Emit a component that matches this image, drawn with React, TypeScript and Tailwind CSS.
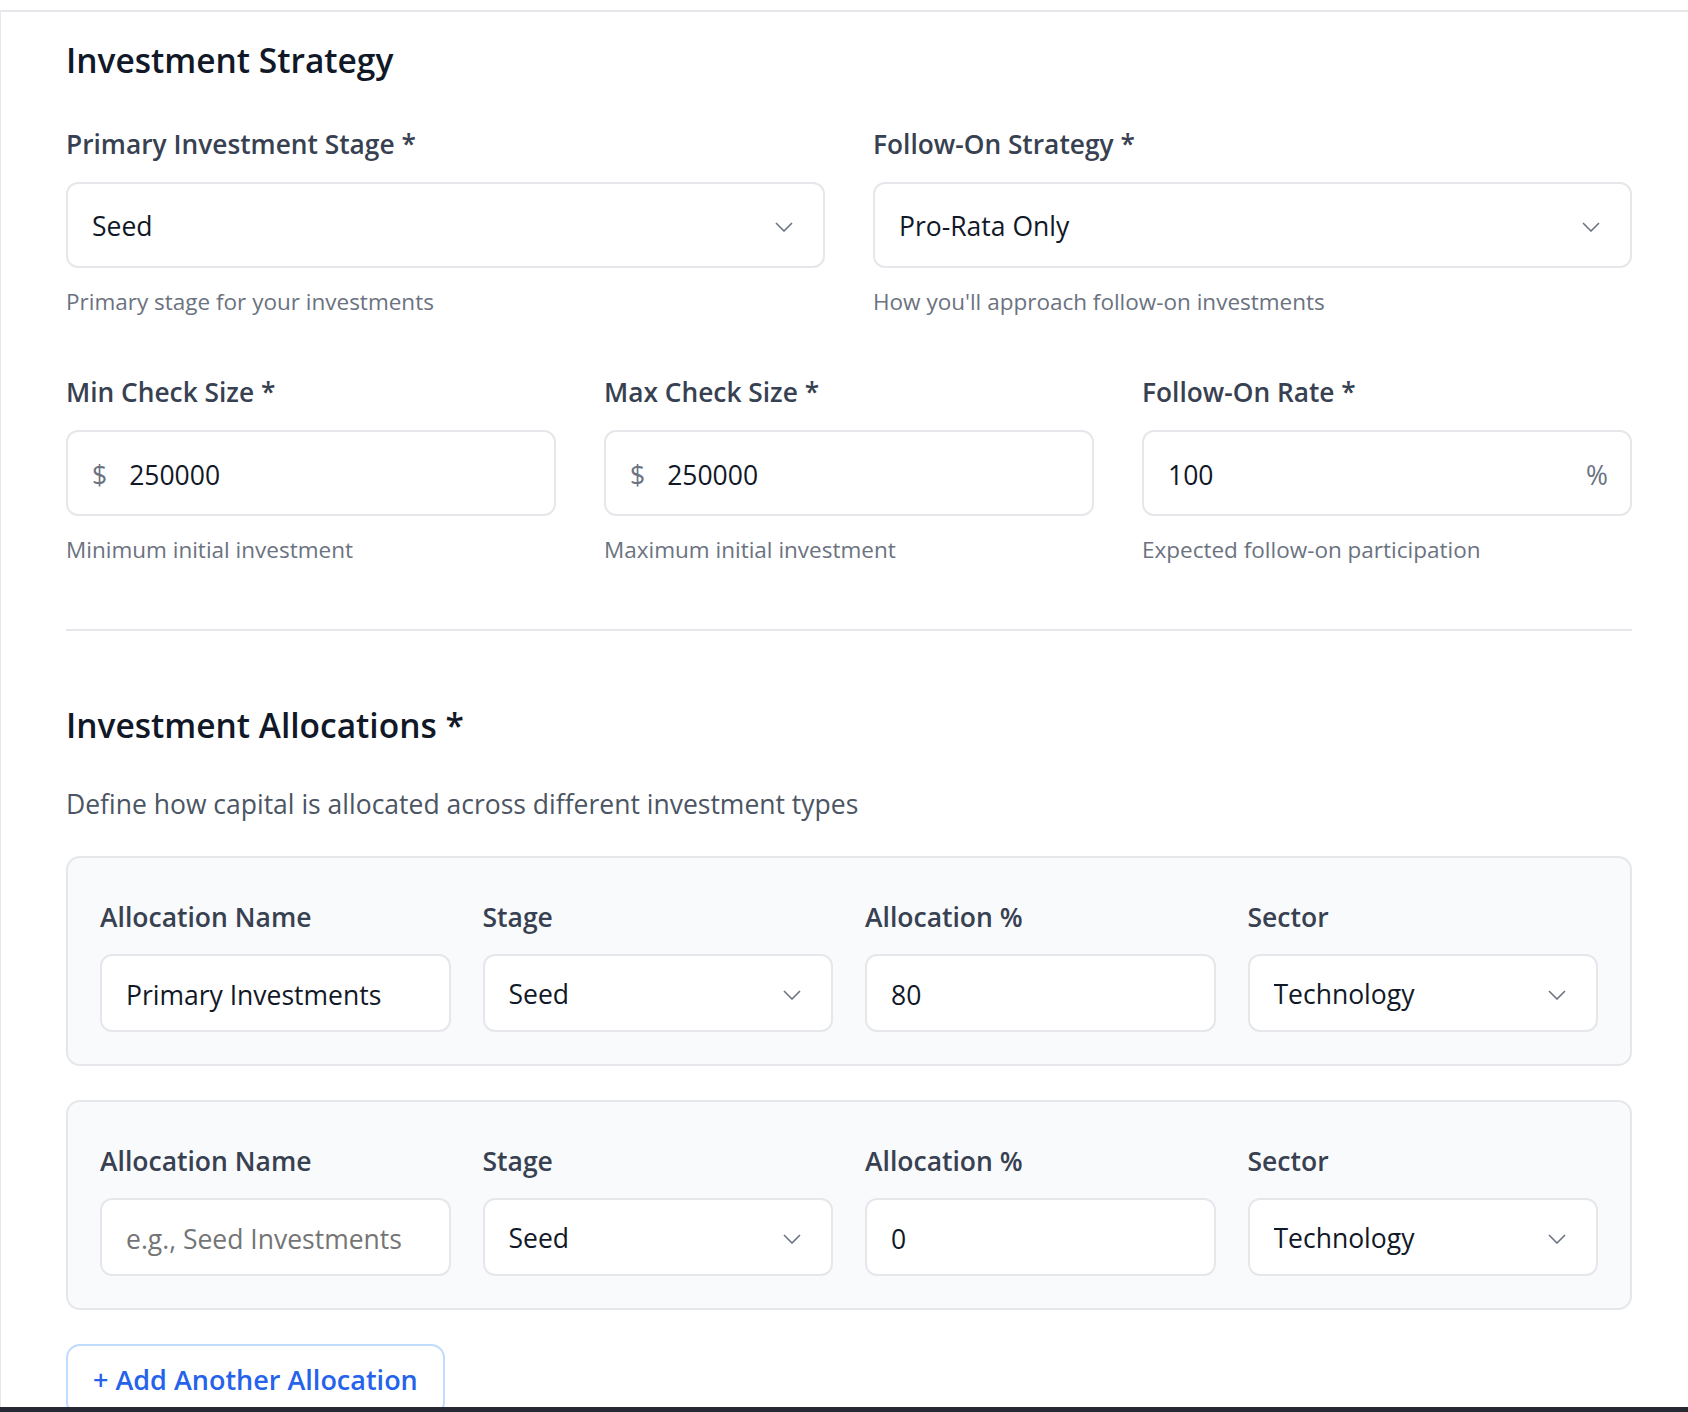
import { useState } from "react";

const stages = ["Pre-Seed", "Seed", "Series A", "Series B", "Growth"];
const followOns = ["Pro-Rata Only", "Super Pro-Rata", "Selective", "None"];
const sectors = ["Technology", "Healthcare", "Fintech", "Consumer", "Climate"];

function Chevron() {
  return (
    <svg width="18" height="10" viewBox="0 0 18 10" fill="none" className="shrink-0">
      <path d="M1 1l8 8 8-8" stroke="#6b7280" strokeWidth="1.6" />
    </svg>
  );
}

function SelectBox({ value, options, tall }: { value: string; options: string[]; tall?: boolean }) {
  const [v, setV] = useState(value);
  return (
    <div
      className={
        "flex items-center border-2 border-[#e5e7eb] rounded-[12px] bg-white pl-6 pr-[30px] pt-[4px] " +
        (tall ? "h-[86px]" : "h-[78px]")
      }
    >
      <select
        value={v}
        onChange={(e) => setV(e.target.value)}
        className="appearance-none flex-1 min-w-0 bg-transparent outline-none text-[26.5px] text-[#111827]"
      >
        {options.map((o) => (
          <option key={o}>{o}</option>
        ))}
      </select>
      <Chevron />
    </div>
  );
}

function TextBox({
  value,
  placeholder,
  prefix,
  suffix,
  tall,
}: {
  value?: string;
  placeholder?: string;
  prefix?: string;
  suffix?: string;
  tall?: boolean;
}) {
  const [v, setV] = useState(value ?? "");
  return (
    <div
      className={
        "flex items-center border-2 border-[#e5e7eb] rounded-[12px] bg-white pl-6 pt-[5px] " +
        (suffix ? "pr-[22px] " : "pr-6 ") +
        (tall ? "h-[86px]" : "h-[78px]")
      }
    >
      {prefix && <span className="text-[26.5px] text-[#6b7280] mr-[22px]">{prefix}</span>}
      <input
        value={v}
        placeholder={placeholder}
        onChange={(e) => setV(e.target.value)}
        className="flex-1 min-w-0 bg-transparent outline-none text-[26.5px] text-[#111827] placeholder:text-[#757575]"
      />
      {suffix && <span className="text-[26.5px] text-[#6b7280]">{suffix}</span>}
    </div>
  );
}

function Field({
  label,
  help,
  children,
}: {
  label: string;
  help: string;
  children: React.ReactNode;
}) {
  return (
    <div>
      <label className="block text-[26.3px] leading-[40px] font-semibold text-[#374151] mb-[18px]">{label}</label>
      {children}
      <p className="mt-[18px] text-[22.5px] leading-[32px] text-[#6b7280]">{help}</p>
    </div>
  );
}

function AllocationCard({ name, placeholder, pct }: { name?: string; placeholder?: string; pct: string }) {
  const label = "block text-[26.5px] leading-[40px] font-semibold text-[#374151] mb-[17px]";
  return (
    <div className="border-2 border-[#e5e7eb] rounded-[14px] bg-[#f9fafb] pt-[39px] px-8 pb-8">
      <div className="grid grid-cols-4 gap-8">
        <div>
          <label className={label}>Allocation Name</label>
          <TextBox value={name} placeholder={placeholder} />
        </div>
        <div>
          <label className={label}>Stage</label>
          <SelectBox value="Seed" options={stages} />
        </div>
        <div>
          <label className={label}>Allocation %</label>
          <TextBox value={pct} />
        </div>
        <div>
          <label className={label}>Sector</label>
          <SelectBox value="Technology" options={sectors} />
        </div>
      </div>
    </div>
  );
}

export default function App() {
  return (
    <div className="h-screen flex flex-col bg-white font-['Open_Sans',sans-serif] overflow-hidden">
      <div className="flex-1 overflow-hidden pt-[10px]">
        <div className="border-t-2 border-l border-[#e5e7eb] pl-[65px] pr-[56px] pt-[24px] min-h-full">
          <h2 className="text-[33.5px] leading-[48px] font-semibold text-[#111827]">Investment Strategy</h2>

          <div className="grid grid-cols-2 gap-x-12 mt-[40px]">
            <Field label="Primary Investment Stage *" help="Primary stage for your investments">
              <SelectBox value="Seed" options={stages} tall />
            </Field>
            <Field label="Follow-On Strategy *" help="How you'll approach follow-on investments">
              <SelectBox value="Pro-Rata Only" options={followOns} tall />
            </Field>
          </div>

          <div className="grid grid-cols-3 gap-x-12 mt-[54px]">
            <Field label="Min Check Size *" help="Minimum initial investment">
              <TextBox value="250000" prefix="$" tall />
            </Field>
            <Field label="Max Check Size *" help="Maximum initial investment">
              <TextBox value="250000" prefix="$" tall />
            </Field>
            <Field label="Follow-On Rate *" help="Expected follow-on participation">
              <TextBox value="100" suffix="%" tall />
            </Field>
          </div>

          <div className="mt-[63px] h-[2px] bg-[#e5e7eb]" />

          <h2 className="mt-[70px] text-[33.5px] leading-[48px] font-semibold text-[#111827]">Investment Allocations *</h2>
          <p className="mt-[37px] text-[26.5px] leading-[36px] text-[#4b5563]">
            Define how capital is allocated across different investment types
          </p>

          <div className="mt-[34px] flex flex-col gap-[34px]">
            <AllocationCard name="Primary Investments" pct="80" />
            <AllocationCard placeholder="e.g., Seed Investments" pct="0" />
          </div>

          <button className="mt-[34px] h-[72px] flex items-center px-[25px] border-2 border-[#bfdbfe] rounded-[14px] bg-white text-[27px] font-semibold text-[#2563eb]">
            + Add Another Allocation
          </button>
        </div>
      </div>
      <div className="h-[5px] shrink-0 bg-[#262834]" />
    </div>
  );
}
